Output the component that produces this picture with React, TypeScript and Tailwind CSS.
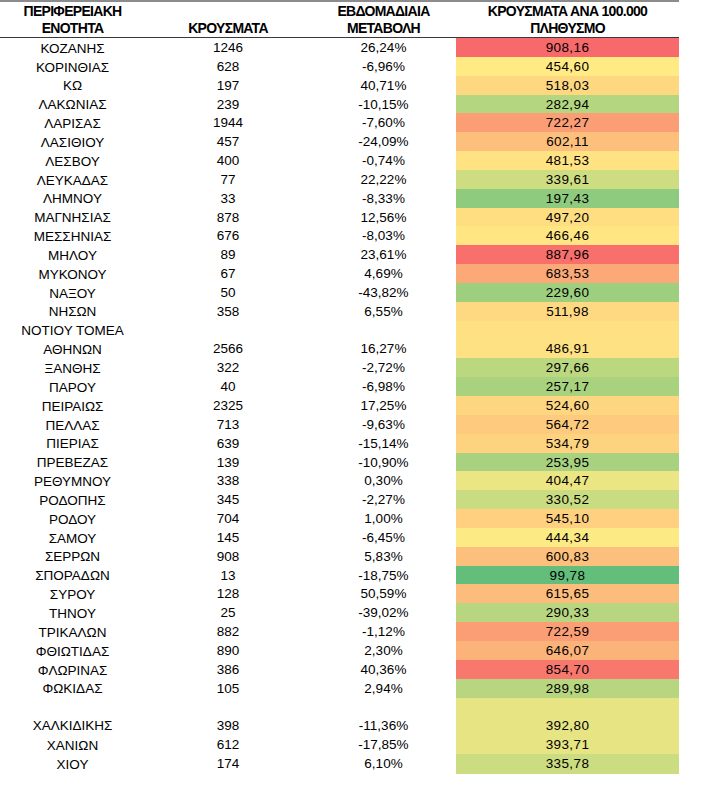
import React from "react";

type Row = {
  name: string[];
  cases: string;
  change: string;
  rate: string;
};

const rows: Row[] = [
  { name: ["ΚΟΖΑΝΗΣ"], cases: "1246", change: "26,24%", rate: "908,16" },
  { name: ["ΚΟΡΙΝΘΙΑΣ"], cases: "628", change: "-6,96%", rate: "454,60" },
  { name: ["ΚΩ"], cases: "197", change: "40,71%", rate: "518,03" },
  { name: ["ΛΑΚΩΝΙΑΣ"], cases: "239", change: "-10,15%", rate: "282,94" },
  { name: ["ΛΑΡΙΣΑΣ"], cases: "1944", change: "-7,60%", rate: "722,27" },
  { name: ["ΛΑΣΙΘΙΟΥ"], cases: "457", change: "-24,09%", rate: "602,11" },
  { name: ["ΛΕΣΒΟΥ"], cases: "400", change: "-0,74%", rate: "481,53" },
  { name: ["ΛΕΥΚΑΔΑΣ"], cases: "77", change: "22,22%", rate: "339,61" },
  { name: ["ΛΗΜΝΟΥ"], cases: "33", change: "-8,33%", rate: "197,43" },
  { name: ["ΜΑΓΝΗΣΙΑΣ"], cases: "878", change: "12,56%", rate: "497,20" },
  { name: ["ΜΕΣΣΗΝΙΑΣ"], cases: "676", change: "-8,03%", rate: "466,46" },
  { name: ["ΜΗΛΟΥ"], cases: "89", change: "23,61%", rate: "887,96" },
  { name: ["ΜΥΚΟΝΟΥ"], cases: "67", change: "4,69%", rate: "683,53" },
  { name: ["ΝΑΞΟΥ"], cases: "50", change: "-43,82%", rate: "229,60" },
  { name: ["ΝΗΣΩΝ"], cases: "358", change: "6,55%", rate: "511,98" },
  { name: ["ΝΟΤΙΟΥ ΤΟΜΕΑ", "ΑΘΗΝΩΝ"], cases: "2566", change: "16,27%", rate: "486,91" },
  { name: ["ΞΑΝΘΗΣ"], cases: "322", change: "-2,72%", rate: "297,66" },
  { name: ["ΠΑΡΟΥ"], cases: "40", change: "-6,98%", rate: "257,17" },
  { name: ["ΠΕΙΡΑΙΩΣ"], cases: "2325", change: "17,25%", rate: "524,60" },
  { name: ["ΠΕΛΛΑΣ"], cases: "713", change: "-9,63%", rate: "564,72" },
  { name: ["ΠΙΕΡΙΑΣ"], cases: "639", change: "-15,14%", rate: "534,79" },
  { name: ["ΠΡΕΒΕΖΑΣ"], cases: "139", change: "-10,90%", rate: "253,95" },
  { name: ["ΡΕΘΥΜΝΟΥ"], cases: "338", change: "0,30%", rate: "404,47" },
  { name: ["ΡΟΔΟΠΗΣ"], cases: "345", change: "-2,27%", rate: "330,52" },
  { name: ["ΡΟΔΟΥ"], cases: "704", change: "1,00%", rate: "545,10" },
  { name: ["ΣΑΜΟΥ"], cases: "145", change: "-6,45%", rate: "444,34" },
  { name: ["ΣΕΡΡΩΝ"], cases: "908", change: "5,83%", rate: "600,83" },
  { name: ["ΣΠΟΡΑΔΩΝ"], cases: "13", change: "-18,75%", rate: "99,78" },
  { name: ["ΣΥΡΟΥ"], cases: "128", change: "50,59%", rate: "615,65" },
  { name: ["ΤΗΝΟΥ"], cases: "25", change: "-39,02%", rate: "290,33" },
  { name: ["ΤΡΙΚΑΛΩΝ"], cases: "882", change: "-1,12%", rate: "722,59" },
  { name: ["ΦΘΙΩΤΙΔΑΣ"], cases: "890", change: "2,30%", rate: "646,07" },
  { name: ["ΦΛΩΡΙΝΑΣ"], cases: "386", change: "40,36%", rate: "854,70" },
  { name: ["ΦΩΚΙΔΑΣ"], cases: "105", change: "2,94%", rate: "289,98" },
  { name: ["", "ΧΑΛΚΙΔΙΚΗΣ"], cases: "398", change: "-11,36%", rate: "392,80" },
  { name: ["ΧΑΝΙΩΝ"], cases: "612", change: "-17,85%", rate: "393,71" },
  { name: ["ΧΙΟΥ"], cases: "174", change: "6,10%", rate: "335,78" },
];

// excel style 3 colour scale: green -> yellow -> red
const MIN = 99.78;
const MID = 450;
const MAX = 908.16;
const green = [99, 190, 123];
const yellow = [255, 235, 132];
const red = [248, 105, 107];

function mix(a: number[], b: number[], t: number) {
  return a.map((v, i) => Math.round(v + (b[i] - v) * t));
}

function scaleColor(rate: string) {
  const v = parseFloat(rate.replace(",", "."));
  const c =
    v <= MID
      ? mix(green, yellow, Math.max(0, (v - MIN) / (MID - MIN)))
      : mix(yellow, red, Math.min(1, (v - MID) / (MAX - MID)));
  return `rgb(${c[0]}, ${c[1]}, ${c[2]})`;
}

const cols = "grid grid-cols-[145px_166px_145px_223px]";

export default function App() {
  return (
    <div className="w-[715px] h-[798px] bg-white text-black font-['Liberation_Sans',Arial,sans-serif]">
      <div className="w-[679px]">
        <div className={`${cols} h-[38px] border-t-2 border-b-[1.5px] border-t-[#8c8c8c] border-b-[#3a3a3a] items-end text-[14px] font-bold leading-[17.25px] tracking-[-0.7px] text-center`}>
          <div>
            <div>ΠΕΡΙΦΕΡΕΙΑΚΗ</div>
            <div>ΕΝΟΤΗΤΑ</div>
          </div>
          <div>ΚΡΟΥΣΜΑΤΑ</div>
          <div>
            <div>ΕΒΔΟΜΑΔΙΑΙΑ</div>
            <div>ΜΕΤΑΒΟΛΗ</div>
          </div>
          <div>
            <div>ΚΡΟΥΣΜΑΤΑ ΑΝΑ 100.000</div>
            <div>ΠΛΗΘΥΣΜΟ</div>
          </div>
        </div>

        {rows.map((r) => {
          const tall = r.name.length > 1;
          return (
            <div
              key={r.name.join(" ") + r.cases}
              className={`${cols} ${tall ? "h-[37.7px]" : "h-[18.85px]"} text-[13.5px] text-center`}
            >
              <div className="flex flex-col justify-end">
                {r.name.map((n, i) => (
                  <div key={i} className="h-[18.85px] leading-[19.5px]">
                    {n}
                  </div>
                ))}
              </div>
              <div className="flex items-end justify-center leading-[19.5px]">{r.cases}</div>
              <div className="flex items-end justify-center leading-[19.5px]">{r.change}</div>
              <div
                className="flex items-end justify-center leading-[19.5px] tracking-[0.4px]"
                style={{ backgroundColor: scaleColor(r.rate) }}
              >
                {r.rate}
              </div>
            </div>
          );
        })}
      </div>
    </div>
  );
}
